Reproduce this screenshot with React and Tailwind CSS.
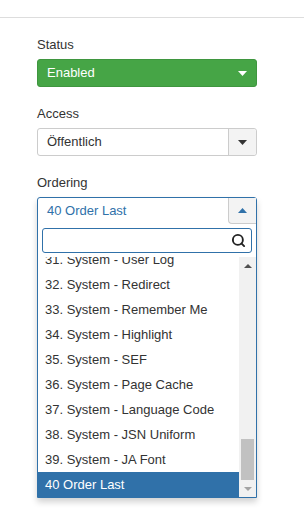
import { Search } from 'lucide-react'

const items = [
  '31. System - User Log',
  '32. System - Redirect',
  '33. System - Remember Me',
  '34. System - Highlight',
  '35. System - SEF',
  '36. System - Page Cache',
  '37. System - Language Code',
  '38. System - JSN Uniform',
  '39. System - JA Font',
]

function Caret({ up = false, className = '' }) {
  return (
    <svg width="9" height="5" viewBox="0 0 9 5" className={className}>
      <polygon points={up ? '0,5 9,5 4.5,0' : '0,0 9,0 4.5,5'} fill="currentColor" />
    </svg>
  )
}

function Label({ children }) {
  return <div className="h-[18px] leading-[18px] mb-[5px] text-[#333]">{children}</div>
}

export default function App() {
  return (
    <div className="w-[304px] h-[526px] bg-white font-['Liberation_Sans',Arial,sans-serif] text-[13px] overflow-hidden">
      <div className="h-[17px]" />
      <div className="h-px bg-[#dddddd]" />

      <div className="pl-[37px] pt-[18px]">
        <Label>Status</Label>
        <div className="w-[220px] h-[28px] rounded-[3px] bg-[#46a546] border border-[#3f963f] flex items-center justify-between pl-[9px] pr-[9px] text-white mb-[18px]">
          <span>Enabled</span>
          <Caret className="text-white" />
        </div>

        <Label>Access</Label>
        <div className="w-[220px] h-[28px] rounded-[3px] bg-white border border-[#cccccc] flex items-stretch text-[#333] mb-[18px]">
          <span className="flex-1 flex items-center pl-[9px]">Öffentlich</span>
          <span className="w-[28px] bg-[#f3f3f3] border-l border-[#cccccc] rounded-r-[3px] flex items-center justify-center">
            <Caret className="text-[#333]" />
          </span>
        </div>

        <Label>Ordering</Label>
        <div className="w-[220px] border border-[#3071a9] rounded-t-[3px] bg-white shadow-[0_4px_6px_rgba(0,0,0,0.18)]">
          <div className="h-[26px] flex items-stretch">
            <span className="flex-1 flex items-center pl-[9px] text-[#3071a9]">40 Order Last</span>
            <span className="w-[28px] bg-[#f3f3f3] border-l border-b border-[#cccccc] rounded-bl-[4px] flex items-center justify-center">
              <Caret up className="text-[#3071a9]" />
            </span>
          </div>
          <div className="px-[4px] pt-[4px] pb-[4px]">
            <div className="h-[25px] border border-[#3071a9] rounded-[3px] flex items-center justify-end pr-[5px]">
              <Search size={15} strokeWidth={3} className="text-[#222]" />
            </div>
          </div>
          <div className="h-[240px] flex overflow-hidden">
            <div className="flex-1 overflow-hidden">
              <div className="mt-[-10px]">
                {items.map((t) => (
                  <div key={t} className="h-[25px] leading-[25px] pl-[7px] text-[#333] whitespace-nowrap">
                    {t}
                  </div>
                ))}
                <div className="h-[25px] leading-[25px] pl-[7px] bg-[#3071a9] text-white">40 Order Last</div>
              </div>
            </div>
            <div className="w-[17px] bg-[#f1f1f1] flex flex-col items-center">
              <div className="h-[17px] flex items-center justify-center text-[#505050]">
                <svg width="8" height="4" viewBox="0 0 8 4"><polygon points="0,4 8,4 4,0" fill="currentColor" /></svg>
              </div>
              <div className="flex-1 w-full px-[2px] flex flex-col justify-end">
                <div className="h-[41px] bg-[#c1c1c1]" />
              </div>
              <div className="h-[17px] flex items-center justify-center text-[#a3a3a3]">
                <svg width="8" height="4" viewBox="0 0 8 4"><polygon points="0,0 8,0 4,4" fill="currentColor" /></svg>
              </div>
            </div>
          </div>
        </div>
      </div>
    </div>
  )
}
